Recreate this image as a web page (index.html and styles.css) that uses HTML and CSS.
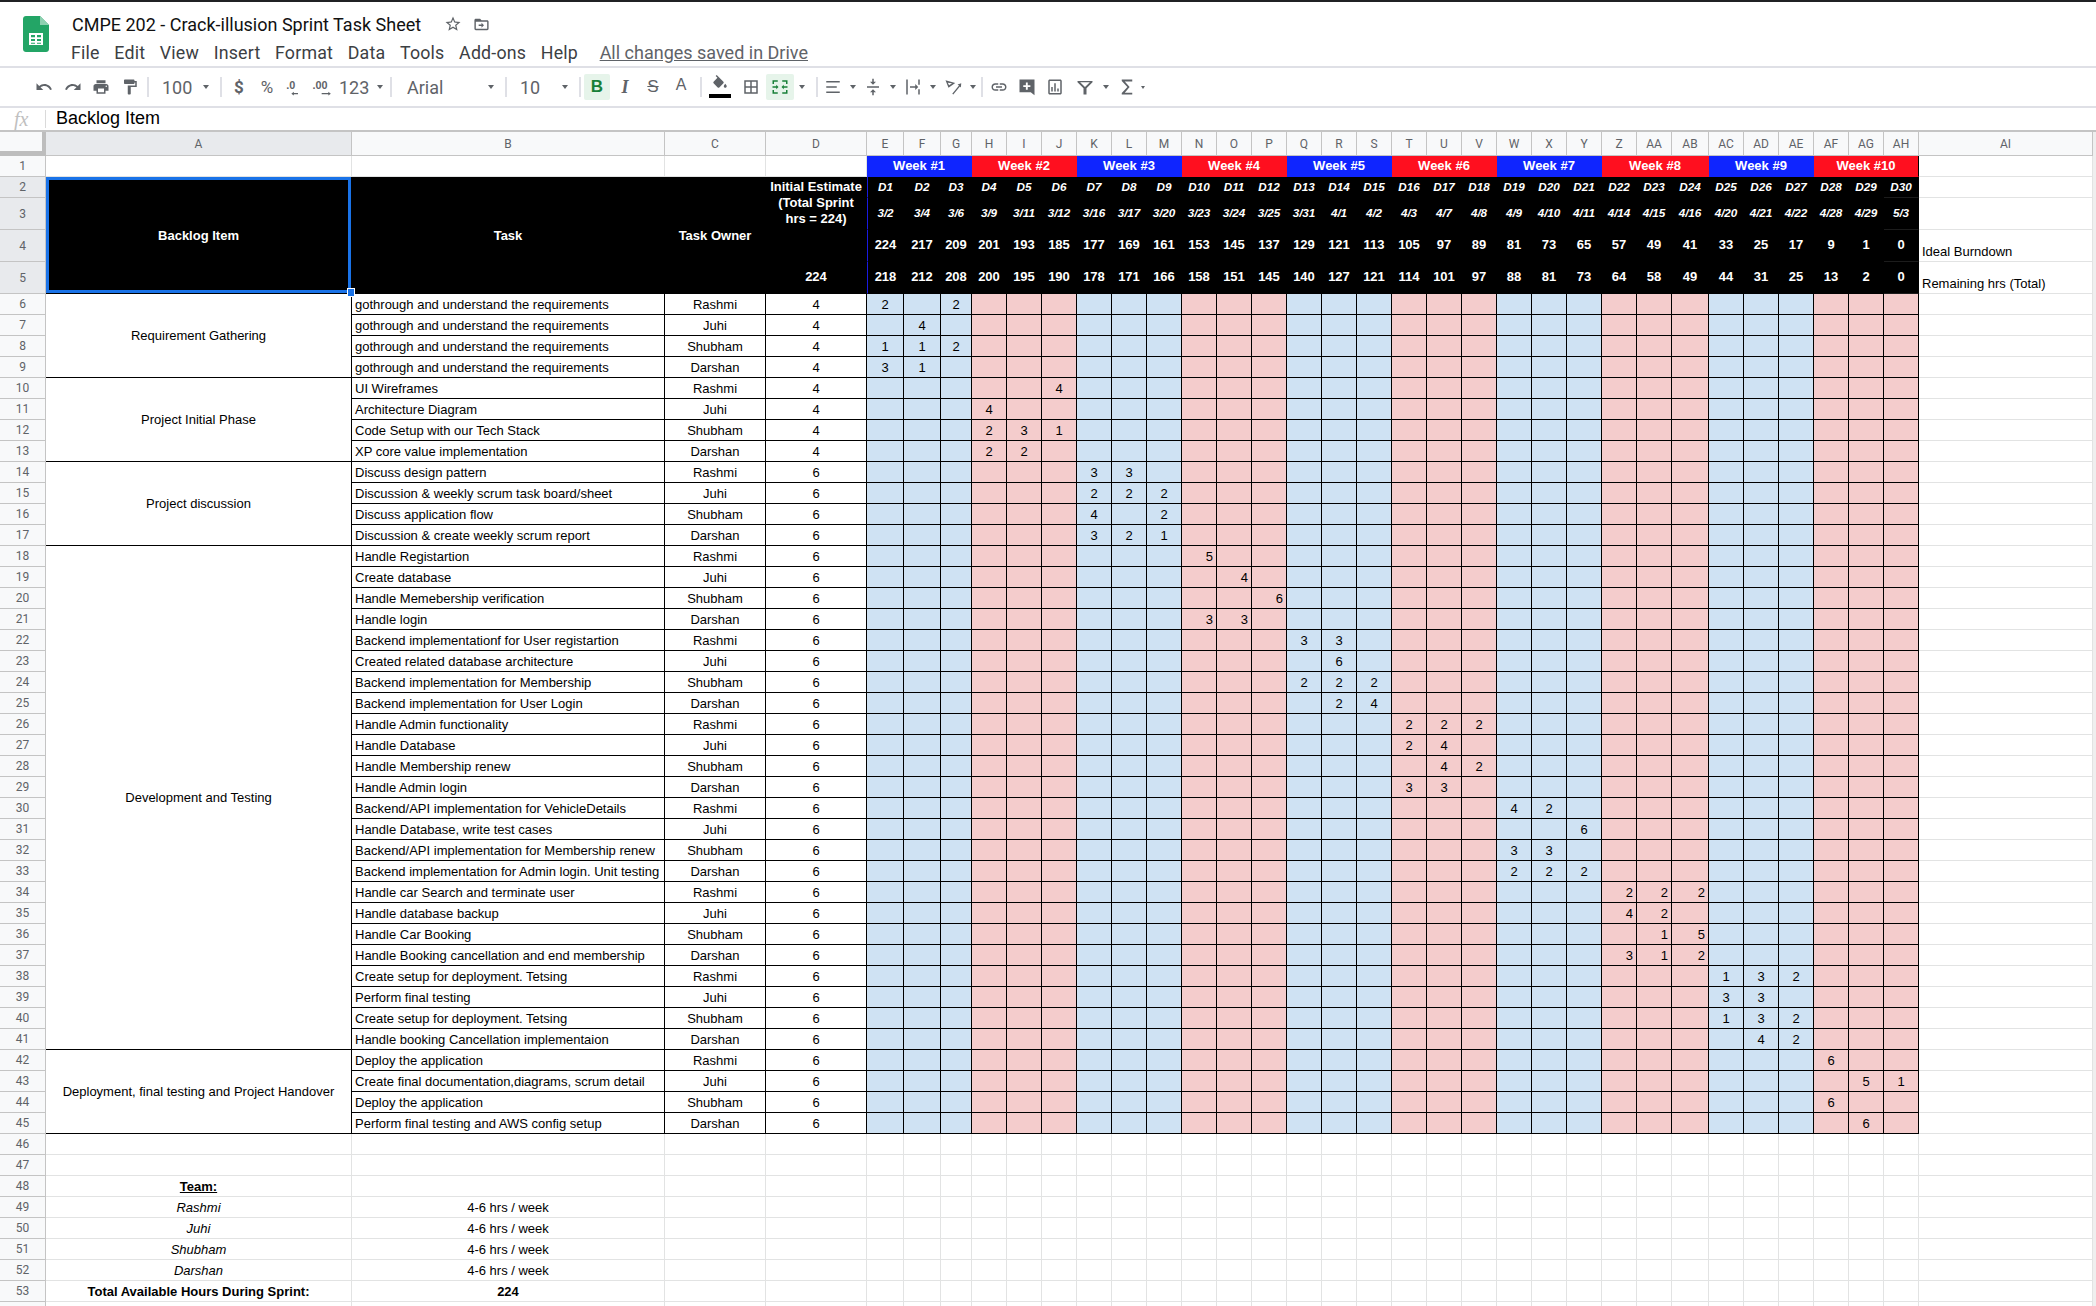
FILE: index.html
```html
<!DOCTYPE html>
<html lang="en">
<head>
  <meta charset="UTF-8">
  <title>CMPE 202 - Crack-illusion Sprint Task Sheet</title>
  <link rel="stylesheet" href="styles.css">
</head>
<body>
  <div class="topline"></div>

  <header class="docbar">
    <svg class="logo" viewBox="0 0 26 36" width="26" height="36">
      <path d="M3 0h14l9 9v24c0 1.7-1.3 3-3 3H3c-1.7 0-3-1.3-3-3V3C0 1.3 1.3 0 3 0z" fill="#23a566"/>
      <path d="M17 0l9 9h-9z" fill="#8ed1b1"/>
      <path d="M6 17h14v12H6z" fill="#fff"/>
      <path d="M8 19h4v2.2H8zM14 19h4v2.2h-4zM8 22.9h4v2.2H8zM14 22.9h4v2.2h-4zM8 26.7h4v1H8zM14 26.7h4v1h-4z" fill="#23a566"/>
    </svg>
    <div class="docinfo">
      <div class="titlerow">
        <span class="doctitle">CMPE 202 - Crack-illusion Sprint Task Sheet</span>
        <svg class="staricon" viewBox="0 0 24 24" width="18" height="18"><path d="M22 9.24l-7.19-.62L12 2 9.19 8.63 2 9.24l5.46 4.73L5.82 21 12 17.27 18.18 21l-1.63-7.03L22 9.24zM12 15.4l-3.76 2.27 1-4.28-3.32-2.88 4.38-.38L12 6.1l1.71 4.04 4.38.38-3.32 2.88 1 4.28L12 15.4z"/></svg>
        <svg class="moveicon" viewBox="0 0 24 24" width="17" height="17"><path d="M20 6h-8l-2-2H4c-1.1 0-2 .9-2 2v12c0 1.1.9 2 2 2h16c1.1 0 2-.9 2-2V8c0-1.1-.9-2-2-2zm0 12H4V8h16v10z"/><path d="M12 9.5v2.5H8v2h4v2.500l3.500-3.500z"/></svg>
      </div>
      <nav class="menurow">
        <span>File</span><span>Edit</span><span>View</span><span>Insert</span><span>Format</span><span>Data</span><span>Tools</span><span>Add-ons</span><span>Help</span>
        <span class="saved">All changes saved in Drive</span>
      </nav>
    </div>
  </header>

  <div class="toolbar">
    <div class="group g-history">
      <span class="tb"><svg viewBox="0 0 24 24"><path d="M12.500 8c-2.650 0-5.050.99-6.900 2.600L2 7v9h9l-3.620-3.620c1.390-1.160 3.160-1.880 5.120-1.880 3.540 0 6.550 2.310 7.600 5.500l2.370-.78C21.080 11.030 17.150 8 12.500 8z"/></svg></span>
      <span class="tb"><svg viewBox="0 0 24 24"><path d="M18.400 10.600C16.550 8.990 14.150 8 11.500 8c-4.650 0-8.580 3.030-9.960 7.220L3.900 16c1.050-3.190 4.050-5.500 7.600-5.500 1.950 0 3.730.72 5.120 1.880L13 16h9V7l-3.600 3.600z"/></svg></span>
      <span class="tb"><svg viewBox="0 0 24 24"><path d="M19 8H5c-1.660 0-3 1.340-3 3v6h4v4h12v-4h4v-6c0-1.660-1.340-3-3-3zm-3 11H8v-5h8v5zm3-7c-.55 0-1-.45-1-1s.45-1 1-1 1 .45 1 1-.45 1-1 1zm-1-9H6v4h12V3z"/></svg></span>
      <span class="tb"><svg viewBox="0 0 24 24"><path d="M18 4V3c0-.55-.45-1-1-1H5c-.55 0-1 .45-1 1v4c0 .55.45 1 1 1h12c.55 0 1-.45 1-1V6h1v4H9v11c0 .55.45 1 1 1h2c.55 0 1-.45 1-1v-9h8V4h-3z"/></svg></span>
    </div>
    <i class="sep"></i>
    <div class="group g-zoom"><span class="tb-text">100</span><i class="caret caret-end"></i></div>
    <i class="sep"></i>
    <div class="group g-number">
      <span class="tb tb-sym">$</span>
      <span class="tb tb-sym tb-pct">%</span>
      <span class="tb tb-narrow"><svg viewBox="0 0 24 24"><text x="4" y="14" class="dec">.0</text><path d="M10 20l3-2.200v1.500h5v1.400h-5v1.500z"/></svg></span>
      <span class="tb tb-wide"><svg viewBox="0 0 30 24"><text x="3" y="14" class="dec">.00</text><path d="M25 20l-3-2.200v1.500h-8v1.400h8v1.500z"/></svg></span>
      <span class="tb-text tb-123">123</span><i class="caret"></i>
    </div>
    <i class="sep"></i>
    <div class="group g-font"><span class="tb-text">Arial</span><i class="caret caret-end"></i></div>
    <i class="sep"></i>
    <div class="group g-size"><span class="tb-text">10</span><i class="caret caret-end"></i></div>
    <i class="sep"></i>
    <div class="group g-style">
      <span class="tb tb-on tb-bold">B</span>
      <span class="tb tb-italic">I</span>
      <span class="tb tb-strike">S</span>
      <span class="tb tb-color">A</span>
    </div>
    <i class="sep"></i>
    <div class="group g-cell">
      <span class="tb tb-fill"><svg viewBox="0 0 24 24"><path d="M16.560 8.940L7.620 0 6.210 1.410l2.380 2.380-5.150 5.150c-.59.59-.59 1.540 0 2.120l5.500 5.500c.29.29.68.44 1.060.44s.77-.15 1.060-.44l5.500-5.500c.59-.58.59-1.530 0-2.120zM19 11.500s-2 2.170-2 3.500c0 1.100.9 2 2 2s2-.9 2-2c0-1.330-2-3.500-2-3.500z"/></svg><b class="fillbar"></b></span>
      <span class="tb tb-borders"><svg viewBox="0 0 24 24"><path d="M3 3v18h18V3H3zm8 16H5v-6h6v6zm0-8H5V5h6v6zm8 8h-6v-6h6v6zm0-8h-6V5h6v6z"/></svg></span>
      <span class="tb tb-on tb-merge"><svg viewBox="0 0 24 24"><path d="M2 3h7v2H4v3H2zM15 3h7v5h-2V5h-5zM2 16h2v3h5v2H2zM20 16h2v5h-7v-2h5zM2 11h5V9l3 3-3 3v-2H2zM22 11h-5V9l-3 3 3 3v-2h5z"/></svg></span>
      <i class="caret caret-merge"></i>
    </div>
    <i class="sep"></i>
    <div class="group g-align">
      <span class="pair"><span class="tb"><svg viewBox="0 0 24 24"><path d="M3 4h18v2H3zM3 11h14v2H3zM3 18h18v2H3z"/></svg></span><i class="caret"></i></span>
      <span class="pair"><span class="tb"><svg viewBox="0 0 24 24"><path d="M8 19h3v4h2v-4h3l-4-4-4 4zm8-14h-3V1h-2v4H8l4 4 4-4zM4 11v2h16v-2H4z"/></svg></span><i class="caret"></i></span>
      <span class="pair"><span class="tb"><svg viewBox="0 0 24 24"><path d="M3 2h2v20H3zM19 2h2v7h-2zM19 15h2v7h-2zM8 11h7V8l4 4-4 4v-3H8z"/></svg></span><i class="caret"></i></span>
      <span class="pair"><span class="tb"><svg viewBox="0 0 24 24"><path d="M2 3l13 3.500-9 6.500zm3 3.200l1.800 3.600 4-2.800zM11 21l9-11-2-1.500 5-1.500-.5 5.500-1.300-1.300-8.800 10.800z"/></svg></span><i class="caret"></i></span>
    </div>
    <i class="sep"></i>
    <div class="group g-insert">
      <span class="tb"><svg viewBox="0 0 24 24"><path d="M3.900 12c0-1.710 1.390-3.100 3.100-3.100h4V7H7c-2.760 0-5 2.240-5 5s2.240 5 5 5h4v-1.900H7c-1.710 0-3.100-1.390-3.100-3.100zM8 13h8v-2H8v2zm9-6h-4v1.900h4c1.710 0 3.100 1.390 3.100 3.100s-1.390 3.100-3.100 3.100h-4V17h4c2.760 0 5-2.240 5-5s-2.240-5-5-5z"/></svg></span>
      <span class="tb"><svg viewBox="0 0 24 24"><path d="M2 2h20v21l-5-4H2zm8.500 4v3.500H7v2.500h3.500v3.500H13V12h3.500V9.500H13V6z" fill-rule="evenodd"/></svg></span>
      <span class="tb"><svg viewBox="0 0 24 24"><path d="M19 2H5C3.900 2 3 2.900 3 4v16c0 1.100.9 2 2 2h14c1.100 0 2-.9 2-2V4c0-1.100-.9-2-2-2zm0 18H5V4h14v16zM7 12h2v6H7zm4-5h2v11h-2zm4 7h2v4h-2z"/></svg></span>
      <span class="tb tb-filter"><svg viewBox="0 0 24 24"><path d="M2 4h20v1.800L14 13.500V22h-4v-8.500L2 5.800zm3.500 1.800L12 12l6.500-6.200z" fill-rule="evenodd"/></svg></span>
      <i class="caret caret-filter"></i>
      <span class="tb tb-sigma"><svg viewBox="0 0 24 24"><path d="M19 2H5v2L12.500 12 5 20v2h14v-2.500H9L15.500 12 9 4.500h10z"/></svg></span>
      <i class="caret caret-small"></i>
    </div>
  </div>

  <div class="formulabar">
    <span class="fx">fx</span>
    <span class="formula">Backlog Item</span>
  </div>

  <div class="sheet">
    <table class="grid" id="grid"></table>
  </div>

  <script src="script.js"></script>
</body>
</html>
```

FILE: styles.css
```css
html, body {
  height: 100%;
  margin: 0;
}
body {
  overflow: hidden;
  background-color: #fff;
  color: #000;
  font-family: Roboto, "Liberation Sans", sans-serif;
}
.topline {
  height: 2px;
  background-color: #202124;
}

/* doc header */
.docbar {
  display: flex;
  height: 64px;
  border-bottom: 2px solid #dfe0e6;
  box-sizing: content-box;
}
.logo {
  margin: 14px 0 0 23px;
}
.docinfo {
  margin-left: 23px;
}
.titlerow {
  display: flex;
  align-items: center;
  height: 22px;
  margin-top: 11px;
}
.doctitle {
  font-size: 18px;
  color: #111;
  white-space: nowrap;
}
.staricon {
  margin-left: 23px;
  fill: #5f6368;
}
.moveicon {
  margin-left: 11px;
  fill: #5f6368;
}
.menurow {
  display: flex;
  gap: 14.600px;
  margin: 7px 0 0 -1px;
  font-size: 17.800px;
  letter-spacing: 0.2px;
  color: #3c4043;
  white-space: nowrap;
}
.saved {
  margin-left: 7px;
  font-size: 18px;
  color: #5f6368;
  text-decoration: underline;
  letter-spacing: 0;
}

/* toolbar */
.toolbar {
  display: flex;
  align-items: center;
  height: 38px;
  padding-left: 30px;
  border-bottom: 2px solid #dfe0e6;
}
.group {
  display: flex;
  align-items: center;
  height: 100%;
}
.g-history { width: 117px; }
.g-zoom { width: 71px; padding-left: 13px; box-sizing: border-box; }
.g-number { width: 168px; padding-left: 3px; box-sizing: border-box; }
.g-font { width: 113px; padding-left: 15px; box-sizing: border-box; }
.g-size { width: 72px; padding-left: 13px; box-sizing: border-box; }
.g-style { width: 119px; padding-left: 3px; box-sizing: border-box; }
.g-cell { width: 114px; padding-left: 4px; box-sizing: border-box; }
.g-align { width: 163px; padding-left: 2px; box-sizing: border-box; }
.g-insert { width: 170px; padding-left: 2px; box-sizing: border-box; }
.sep {
  display: block;
  flex: none;
  width: 2px;
  height: 20px;
  background-color: #dfe0e6;
}
.tb {
  display: flex;
  flex: none;
  align-items: center;
  justify-content: center;
  position: relative;
  width: 28.6px;
  height: 26px;
  color: #5f6368;
  fill: #5f6368;
}
.tb svg {
  width: 18px;
  height: 18px;
}
.tb-text {
  font-size: 18px;
  color: #5f6368;
}
.tb-123 { margin-right: 4px; }
.tb-sym {
  width: 28px;
  font-size: 17px;
}
.g-number .tb-sym:first-child { font-weight: 700; }
.tb-narrow { width: 24px; }
.tb-narrow svg { width: 20px; height: 20px; }
.tb-wide { width: 34px; }
.tb-wide svg { width: 25px; height: 20px; }
.dec {
  font: 700 13px "Liberation Sans", sans-serif;
  fill: #5f6368;
}
.tb-on {
  background-color: #e6f4ea;
  border-radius: 2px;
}
.tb-bold {
  width: 26px;
  margin-right: 1px;
  color: #188038;
  font: 700 17px "Liberation Sans", sans-serif;
}
.tb-italic {
  width: 28px;
  font: italic 700 18px "Liberation Serif", serif;
}
.tb-strike {
  width: 28px;
  font: 17px "Liberation Sans", sans-serif;
  text-decoration: line-through;
}
.tb-color {
  width: 28px;
  font: 16px "Liberation Sans", sans-serif;
  padding-bottom: 5px;
  box-sizing: border-box;
}
.tb-fill { width: 28px; }
.tb-fill svg { margin-bottom: 6px; }
.fillbar {
  position: absolute;
  left: 3px;
  bottom: 2px;
  width: 22px;
  height: 4px;
  background-color: #000;
}
.tb-borders { width: 28px; margin: 0 1px 0 3px; }
.tb-merge {
  width: 28px;
  fill: #188038;
}
.caret {
  display: block;
  flex: none;
  width: 0;
  height: 0;
  margin-left: 4px;
  border-top: 4px solid #5f6368;
  border-left: 3.500px solid transparent;
  border-right: 3.500px solid transparent;
}
.caret-end {
  margin-left: auto;
  margin-right: 11px;
}
.caret-merge { margin-left: 5px; }
.pair {
  display: flex;
  align-items: center;
  flex: none;
  width: 40px;
}
.pair .tb { width: 26px; }
.tb-filter { margin-left: 2px; width: 28px; }
.caret-filter { margin: 0 4px; }
.tb-sigma { width: 28px; }
.caret-small {
  margin-left: 0;
  border-top-width: 3px;
  border-left-width: 2.500px;
  border-right-width: 2.500px;
}
.g-insert .tb { width: 28px; }

/* formula bar */
.formulabar {
  display: flex;
  align-items: center;
  height: 22px;
  border-bottom: 2px solid #c4c4c4;
}
.fx {
  width: 46px;
  box-sizing: border-box;
  padding-left: 14px;
  border-right: 1px solid #dadada;
  color: #c0c0c0;
  font: italic 20px "Liberation Serif", serif;
  line-height: 18px;
}
.formula {
  margin-left: 10px;
  margin-top: -2px;
  font: 18px "Liberation Sans", sans-serif;
}

/* sheet */
.sheet {
  height: 1174px;
  overflow: hidden;
  background-color: #efefef;
}
.grid {
  table-layout: fixed;
  width: 2093px;
  border-collapse: separate;
  border-spacing: 0;
  background-color: #fff;
  font: 13px "Liberation Sans", sans-serif;
}
.c-hdr { width: 46px; }
.c-a { width: 306px; }
.c-b { width: 313px; }
.c-cd { width: 101px; }
.c-w { width: 37px; }
.c-g { width: 31px; }
.c-day { width: 35px; }
.c-ai { width: 174px; }
.grid tr { height: 21px; }
.grid tr.tall { height: 32px; }
.grid tr.head { height: 24px; }
.grid td, .grid th {
  box-sizing: border-box;
  padding: 2px 3px 0;
  overflow: hidden;
  white-space: nowrap;
  text-align: center;
  vertical-align: middle;
  line-height: 1.1;
  border-right: 1px solid #e2e3e3;
  border-bottom: 1px solid #e2e3e3;
  font-weight: 400;
}
.grid th {
  padding-top: 0;
  background-color: #f8f9fa;
  border-color: #c4c4c4;
  color: #5f6368;
  font: 12px Roboto, sans-serif;
}
.grid th.sel { background-color: #e8eaed; }
.grid th.corner {
  border-right: 4px solid #bdbdbd;
  border-bottom: 5px solid #bdbdbd;
}
.grid td.line {
  border-color: #000;
}
.grid td.left { text-align: left; }
.grid td.right { text-align: right; padding-right: 3px; }
.grid td.blue { background-color: #cfe2f3; }
.grid td.pink { background-color: #f4cccc; }
.grid td.black {
  background-color: #000;
  border-color: #000;
  color: #fff;
  font-weight: 700;
}
.grid td.black.cells { padding-top: 0; }
.grid td.black.day, .grid td.black.date {
  font-size: 11.700px;
  font-style: italic;
}
.grid td.black.first { border-left: 1px solid #1a1ae0; }
.grid td.black.last { border-bottom-color: #1c1c1c; }
.grid td.wrap {
  white-space: normal;
  vertical-align: top;
  padding-top: 2px;
  line-height: 16px;
}
.grid td.wk1 {
  padding-top: 0;
  background-color: #0f25ff;
  border-color: #0f25ff;
  color: #fff;
  font-weight: 700;
}
.grid td.wk2 {
  padding-top: 0;
  background-color: #ff0f1f;
  border-color: #ff0f1f;
  color: #fff;
  font-weight: 700;
}
.grid td.wkend { border-right-color: #000; }
.grid td.selected {
  position: relative;
  box-shadow: inset 0 0 0 3px #1a73e8;
  overflow: visible;
}
.handle {
  position: absolute;
  right: -4px;
  bottom: -4px;
  width: 6px;
  height: 7px;
  background-color: #1a73e8;
  border: 1px solid #fff;
  z-index: 2;
}
.grid td.note {
  text-align: left;
  vertical-align: bottom;
  padding-bottom: 2px;
}
.grid td.bold { font-weight: 700; }
.grid td.team { font-style: italic; }
.grid td.under {
  font-weight: 700;
  text-decoration: underline;
}
```

FILE: script.js
```js
// sheet data, rows are built below
const columnas = ["A", "B", "C", "D", "E", "F", "G", "H", "I", "J", "K", "L", "M", "N", "O", "P", "Q", "R", "S", "T", "U", "V", "W", "X", "Y", "Z", "AA", "AB", "AC", "AD", "AE", "AF", "AG", "AH", "AI"];
const dias = columnas.slice(4, 34);
const fechas = ["3/2", "3/4", "3/6", "3/9", "3/11", "3/12", "3/16", "3/17", "3/20", "3/23", "3/24", "3/25", "3/31", "4/1", "4/2", "4/3", "4/7", "4/8", "4/9", "4/10", "4/11", "4/14", "4/15", "4/16", "4/20", "4/21", "4/22", "4/28", "4/29", "5/3"];
const ideal = [224, 217, 209, 201, 193, 185, 177, 169, 161, 153, 145, 137, 129, 121, 113, 105, 97, 89, 81, 73, 65, 57, 49, 41, 33, 25, 17, 9, 1, 0];
const restante = [218, 212, 208, 200, 195, 190, 178, 171, 166, 158, 151, 145, 140, 127, 121, 114, 101, 97, 88, 81, 73, 64, 58, 49, 44, 31, 25, 13, 2, 0];

const bloques = [
  ["Requirement Gathering", 4],
  ["Project Initial Phase", 4],
  ["Project discussion", 4],
  ["Development and Testing", 24],
  ["Deployment, final testing and Project Handover", 4]
];

const duenos = ["Rashmi", "Juhi", "Shubham", "Darshan"];

const tareas = [
  ["gothrough and understand the requirements", "E2 G2"],
  ["gothrough and understand the requirements", "F4"],
  ["gothrough and understand the requirements", "E1 F1 G2"],
  ["gothrough and understand the requirements", "E3 F1"],
  ["UI Wireframes", "J4"],
  ["Architecture Diagram", "H4"],
  ["Code Setup with our Tech Stack", "H2 I3 J1"],
  ["XP core value implementation", "H2 I2"],
  ["Discuss design pattern", "K3 L3"],
  ["Discussion & weekly scrum task board/sheet", "K2 L2 M2"],
  ["Discuss application flow", "K4 M2"],
  ["Discussion & create weekly scrum report", "K3 L2 M1"],
  ["Handle Registartion", "N5"],
  ["Create database", "O4"],
  ["Handle Memebership verification", "P6"],
  ["Handle login", "N3 O3"],
  ["Backend implementationf for User registartion", "Q3 R3"],
  ["Created related database architecture", "R6"],
  ["Backend implementation for Membership", "Q2 R2 S2"],
  ["Backend implementation for User Login", "R2 S4"],
  ["Handle Admin functionality", "T2 U2 V2"],
  ["Handle Database", "T2 U4"],
  ["Handle Membership renew", "U4 V2"],
  ["Handle Admin login", "T3 U3"],
  ["Backend/API implementation for VehicleDetails", "W4 X2"],
  ["Handle Database, write test cases", "Y6"],
  ["Backend/API implementation for Membership renew", "W3 X3"],
  ["Backend implementation for Admin login. Unit testing", "W2 X2 Y2"],
  ["Handle car Search and terminate user", "Z2 AA2 AB2"],
  ["Handle database backup", "Z4 AA2"],
  ["Handle Car Booking", "AA1 AB5"],
  ["Handle Booking cancellation and end membership", "Z3 AA1 AB2"],
  ["Create setup for deployment. Tetsing", "AC1 AD3 AE2"],
  ["Perform final testing", "AC3 AD3"],
  ["Create setup for deployment. Tetsing", "AC1 AD3 AE2"],
  ["Handle booking Cancellation implementaion", "AD4 AE2"],
  ["Deploy the application", "AF6"],
  ["Create final documentation,diagrams, scrum detail", "AG5 AH1"],
  ["Deploy the application", "AF6"],
  ["Perform final testing and AWS config setup", "AG6"]
];

// rows whose numbers were left right aligned in the sheet
const filasDerecha = [18, 19, 20, 21, 34, 35, 36, 37];

const equipo = ["Rashmi", "Juhi", "Shubham", "Darshan"];

function td(clase, texto, extra) {
  const attrs = extra || "";
  const contenido = texto === undefined ? "" : String(texto).replace(/&/g, "&amp;");
  return `<td class="${clase || ""}" ${attrs}>${contenido}</td>`;
}

function claseColumna(i) {
  if (i === 0) return "c-a";
  if (i === 1) return "c-b";
  if (i === 2 || i === 3) return "c-cd";
  if (i === 4 || i === 5 || i === 27) return "c-w";
  if (i === 6) return "c-g";
  if (i === 34) return "c-ai";
  return "c-day";
}

function celdasVacias(desde, hasta) {
  let html = "";
  for (let i = desde; i < hasta; i++) html += td();
  return html;
}

function filaNegra(clase, valores, etiqueta) {
  let html = valores.map((v, i) => {
    let c = `black cells ${clase}`;
    if (i === 0) c += " first";
    if (i === 29) c += " last";
    return td(c, v);
  }).join("");
  return html + td("note", etiqueta);
}

let html = `<colgroup><col class="c-hdr">${columnas.map((c, i) => `<col class="${claseColumna(i)}">`).join("")}</colgroup>`;

// column letters
html += `<tr class="head"><th class="corner"></th>${columnas.map((c, i) => `<th class="${i === 0 ? "sel" : ""}">${c}</th>`).join("")}</tr>`;

// row 1, the weeks
html += `<tr><th>1</th>${celdasVacias(0, 4)}`;
for (let w = 1; w <= 10; w++) {
  html += td(`wk${w % 2 ? 1 : 2}${w === 10 ? " wkend" : ""}`, `Week #${w}`, 'colspan="3"');
}
html += td() + "</tr>";

// rows 2 to 5, the black header
html += `<tr><th class="sel">2</th>`;
html += `<td class="black selected" rowspan="4">Backlog Item<span class="handle"></span></td>`;
html += td("black", "Task", 'rowspan="4"');
html += td("black", "Task Owner", 'rowspan="4"');
html += td("black wrap", "Initial Estimate (Total Sprint hrs = 224)", 'rowspan="3"');
html += filaNegra("day", dias.map((d, i) => `D${i + 1}`)) + "</tr>";
html += `<tr class="tall"><th class="sel">3</th>${filaNegra("date", fechas)}</tr>`;
html += `<tr class="tall"><th class="sel">4</th>${filaNegra("", ideal, "Ideal Burndown")}</tr>`;
html += `<tr class="tall"><th class="sel">5</th>${td("black cells", 224)}${filaNegra("", restante, "Remaining hrs (Total)")}</tr>`;

// rows 6 to 45, the tasks
let fila = 6;
bloques.forEach((bloque) => {
  for (let k = 0; k < bloque[1]; k++, fila++) {
    const tarea = tareas[fila - 6];
    const valores = {};
    tarea[1].split(" ").forEach((v) => {
      valores[v.replace(/\d/g, "")] = v.replace(/\D/g, "");
    });
    html += `<tr><th>${fila}</th>`;
    if (k === 0) html += td("line", bloque[0], `rowspan="${bloque[1]}"`);
    html += td("line left", tarea[0]);
    html += td("line", duenos[(fila - 6) % 4]);
    html += td("line", fila < 14 ? 4 : 6);
    dias.forEach((col, i) => {
      let c = Math.floor(i / 3) % 2 ? "line pink" : "line blue";
      if (filasDerecha.includes(fila)) c += " right";
      html += td(c, valores[col]);
    });
    html += td() + "</tr>";
  }
});

// rows 46 to 53, the team
for (let n = 46; n <= 53; n++) {
  let a = "", b = "", ca = "", cb = "";
  if (n === 48) { a = "Team:"; ca = "under"; }
  if (n >= 49 && n <= 52) { a = equipo[n - 49]; ca = "team"; b = "4-6 hrs / week"; }
  if (n === 53) { a = "Total Available Hours During Sprint:"; ca = "bold"; b = 224; cb = "bold"; }
  html += `<tr><th>${n}</th>${td(ca, a)}${td(cb, b)}${celdasVacias(2, 35)}</tr>`;
}

// row 54 starts right at the window bottom, only its top shows
html += `<tr><th></th>${celdasVacias(0, 35)}</tr>`;

document.getElementById("grid").innerHTML = html;
```
